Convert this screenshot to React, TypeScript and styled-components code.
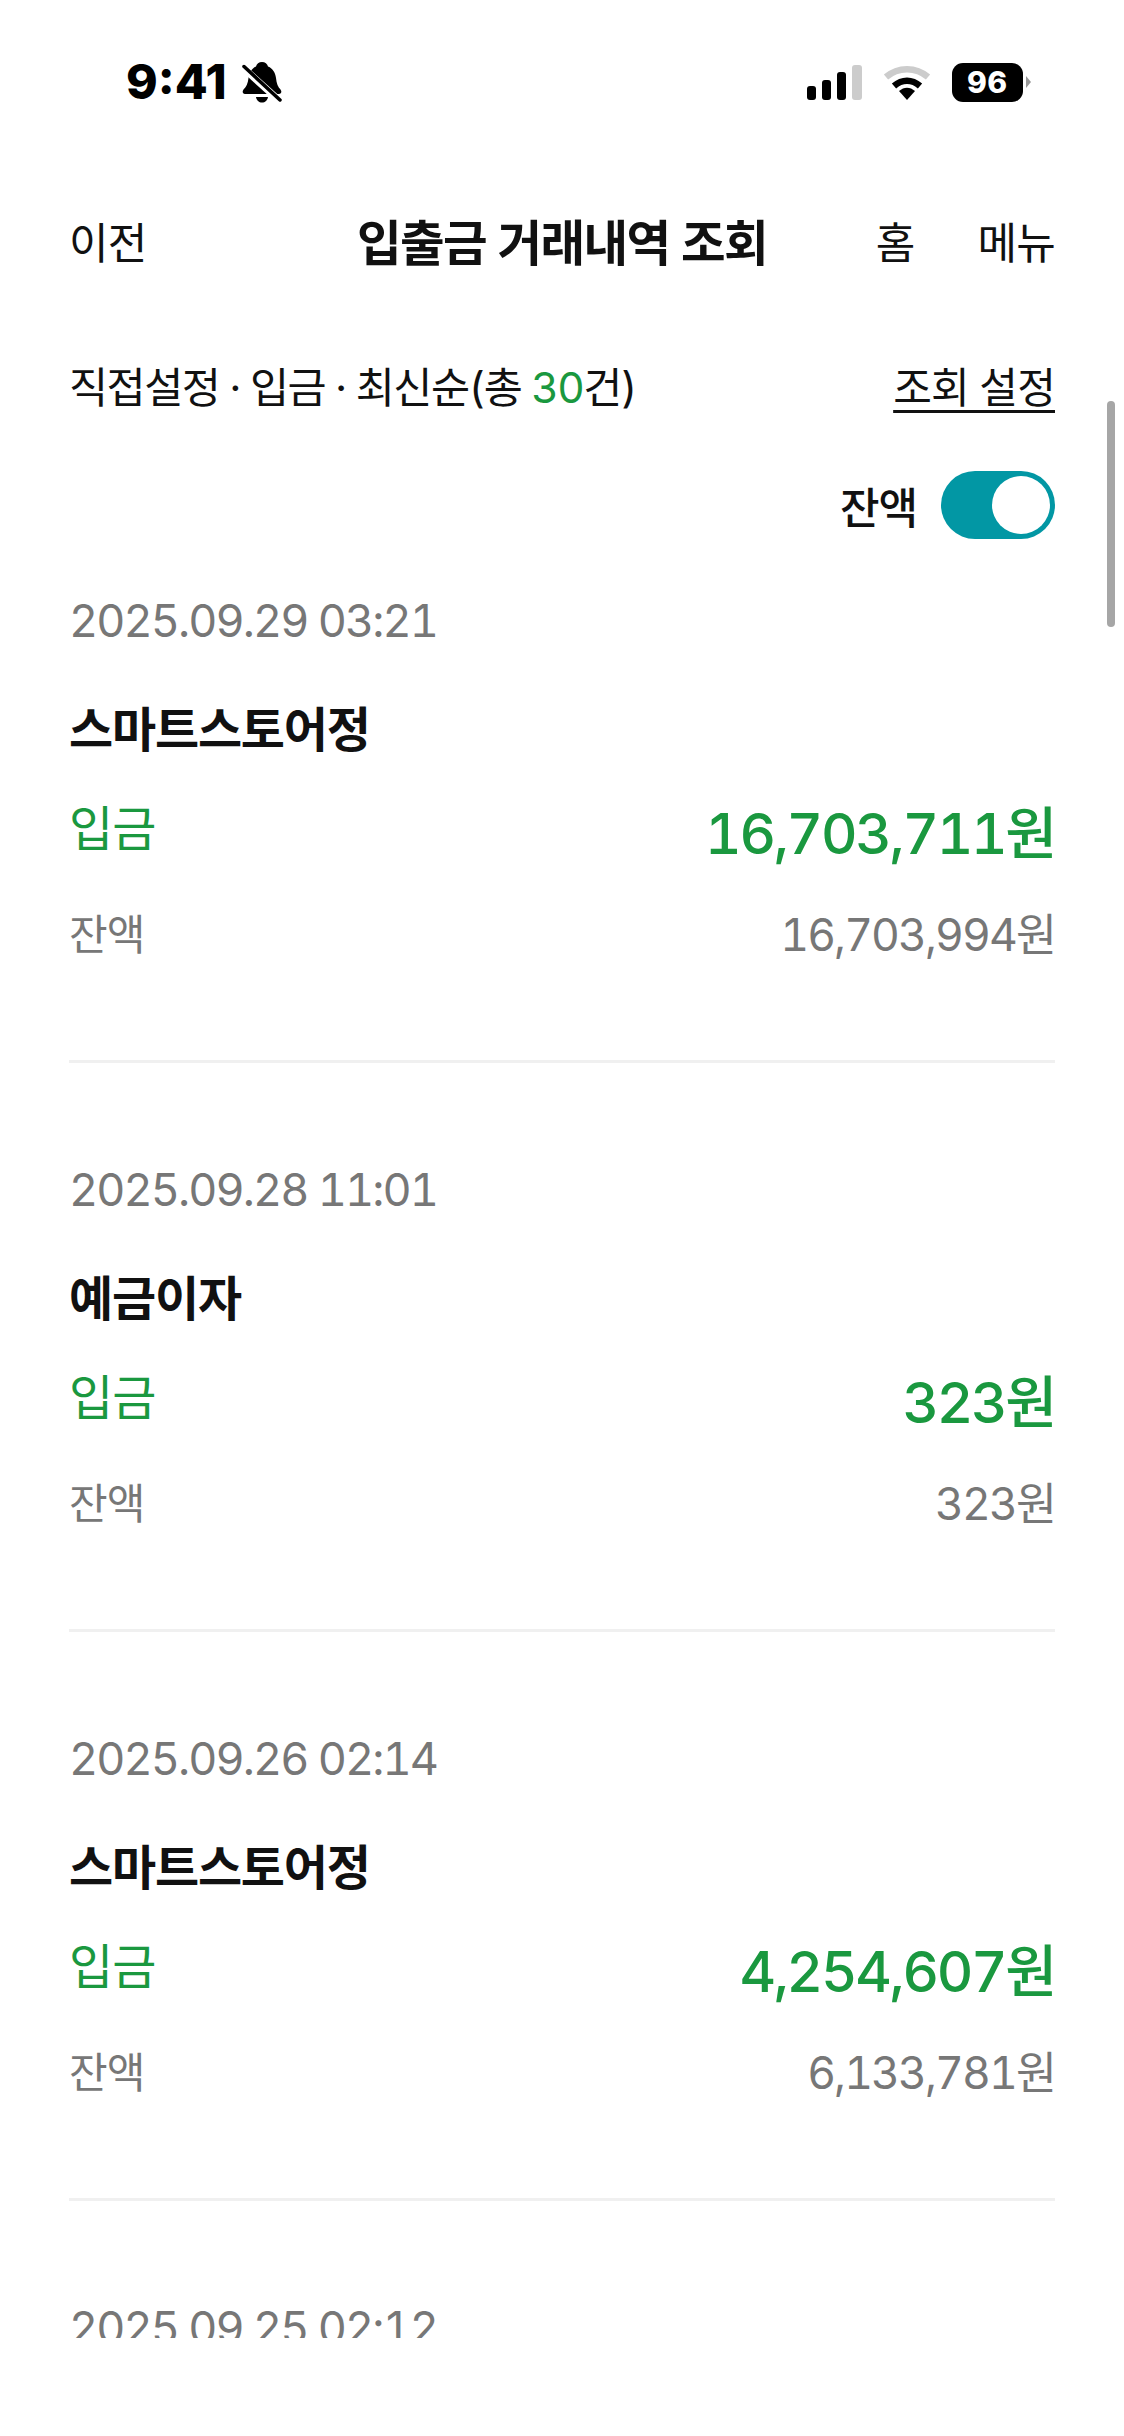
import React from 'react';
import styled, { createGlobalStyle } from 'styled-components';

const GlobalStyle = createGlobalStyle`
  html, body {
    margin: 0;
    padding: 0;
    background: #fff;
  }
  body {
    font-family: Inter, "Noto Sans CJK KR", sans-serif;
    font-variant-numeric: tabular-nums;
    color: #111;
  }
`;

const Page = styled.div`
  position: relative;
  width: 1124px;
  height: 2436px;
  overflow: hidden;
  background: #fff;
`;

const StatusBar = styled.div`
  display: flex;
  align-items: center;
  justify-content: space-between;
  height: 124px;
  padding: 40px 93px 0 126px;
  box-sizing: border-box;
`;

const StatusLeft = styled.div`
  display: flex;
  align-items: center;
  gap: 15px;
`;

const Clock = styled.span`
  font-family: Inter, sans-serif;
  font-variant-numeric: normal;
  font-size: 48px;
  font-weight: 800;
  line-height: 1;
  color: #000;
`;

const StatusRight = styled.div`
  display: flex;
  align-items: center;
  gap: 21px;
`;

const Battery = styled.div`
  display: flex;
  align-items: center;
  gap: 3px;
`;

const BatteryBody = styled.div`
  width: 71px;
  height: 39px;
  border-radius: 11px;
  background: #000;
  color: #fff;
  font-family: Inter, sans-serif;
  font-size: 30px;
  font-weight: 800;
  letter-spacing: 1px;
  display: flex;
  align-items: center;
  justify-content: center;
`;

const BatteryCap = styled.div`
  width: 0;
  height: 0;
  border-top: 6px solid transparent;
  border-bottom: 6px solid transparent;
  border-left: 5px solid #999;
`;

const Nav = styled.div`
  display: grid;
  grid-template-columns: 1fr auto 1fr;
  align-items: center;
  height: 84px;
  margin-top: 74px;
  padding: 0 69px;
`;

const NavText = styled.span`
  font-size: 43px;
  font-weight: 400;
  letter-spacing: -0.8px;
`;

const NavTitle = styled.h1`
  margin: 0;
  font-size: 48.5px;
  font-weight: 700;
  letter-spacing: -1.6px;
`;

const NavRight = styled.div`
  display: flex;
  justify-content: flex-end;
  gap: 63px;
`;

const FilterRow = styled.div`
  display: flex;
  align-items: center;
  justify-content: space-between;
  height: 60px;
  margin-top: 72px;
  padding: 0 69px;
`;

const FilterText = styled.span`
  font-size: 42.5px;
  letter-spacing: -1.5px;
`;

const Count = styled.span`
  color: #1a983f;
`;

const SettingLink = styled.span`
  font-size: 42px;
  letter-spacing: -0.8px;
  text-decoration: underline;
  text-underline-offset: 7px;
  text-decoration-thickness: 3px;
`;

const BalanceRow = styled.div`
  display: flex;
  align-items: center;
  justify-content: flex-end;
  gap: 24px;
  height: 68px;
  margin-top: 57px;
  padding: 0 69px;
`;

const BalanceLabel = styled.span`
  font-size: 43px;
  letter-spacing: -1px;
  font-weight: 500;
`;

const Toggle = styled.div`
  display: flex;
  justify-content: flex-end;
  align-items: center;
  width: 114px;
  height: 68px;
  padding: 0 5px;
  box-sizing: border-box;
  border-radius: 34px;
  background: #0297a4;
`;

const Knob = styled.div`
  width: 58px;
  height: 58px;
  border-radius: 50%;
  background: #fff;
`;

const List = styled.div`
  height: 1799px;
  overflow: hidden;
  padding: 0 69px;
`;

const Item = styled.div<{ $first?: boolean }>`
  height: ${(p) => (p.$first ? 524 : 569)}px;
  box-sizing: border-box;
  padding-top: ${(p) => (p.$first ? 57 : 102)}px;
  display: flex;
  flex-direction: column;
  border-bottom: 3px solid #f0f0f0;
`;

const Tail = styled.div`
  padding-top: 102px;
`;

const DateText = styled.div`
  font-size: 45px;
  line-height: 50px;
  letter-spacing: -1.9px;
  color: #777;
`;

const Merchant = styled.div`
  margin-top: 54px;
  font-size: 48px;
  line-height: 60px;
  font-weight: 700;
  letter-spacing: -1.2px;
  color: #111;
`;

const Row = styled.div<{ $mt: number }>`
  display: flex;
  align-items: center;
  justify-content: space-between;
  margin-top: ${(p) => p.$mt}px;
`;

const TypeLabel = styled.span`
  font-size: 48px;
  line-height: 50px;
  margin-bottom: 10px;
  color: #1a983f;
  letter-spacing: -1px;
`;

const Amount = styled.span`
  font-size: 56.5px;
  line-height: 70px;
  font-weight: 500;
  letter-spacing: -2.3px;
  color: #1a983f;
`;

const SmallLabel = styled.span`
  font-size: 42px;
  line-height: 50px;
  color: #777;
  letter-spacing: -1px;
`;

const SmallAmount = styled.span`
  font-size: 44.5px;
  line-height: 50px;
  letter-spacing: -1.9px;
  color: #777;
`;

const Scrollbar = styled.div`
  position: absolute;
  top: 401px;
  right: 9px;
  width: 8px;
  height: 226px;
  border-radius: 4px;
  background: #a6a6a6;
`;

const MutedBell = () => (
  <svg width="40" height="41" viewBox="0 0 40 41" fill="none">
    <path
      d="M20 0c3 0 5.500 1.800 6 4.500C31 6.500 33.500 11 34 16c.5 5.500 2 9 4.500 11.500C40 29.500 39.500 32 37 32H3C.5 32 0 29.500 1.500 27.500 4 25 6 21.500 6.500 16 7 11 9.500 6.500 14 4.500 14.500 1.800 17 0 20 0z"
      fill="#000"
    />
    <path d="M14 35h12c-.5 3.500-3 5.500-6 5.500s-5.500-2-6-5.500z" fill="#000" />
    <path d="M-2 3l42 38" stroke="#fff" strokeWidth="7" />
    <path d="M2 4.500l36 33.500" stroke="#000" strokeWidth="3.500" strokeLinecap="round" />
  </svg>
);

const Signal = () => (
  <svg width="55" height="35" viewBox="0 0 55 35" fill="#000">
    <rect x="0" y="21" width="9" height="14" rx="3" />
    <rect x="15" y="15" width="9" height="20" rx="3" />
    <rect x="30" y="7" width="9" height="28" rx="3" />
    <rect x="45" y="0" width="10" height="35" rx="3" fill="#ccc" />
  </svg>
);

const Wifi = () => (
  <svg width="48" height="35" viewBox="0 0 48 35" fill="none">
    <path d="M3 12C15 1.500 33 1.500 45 12" stroke="#ccc" strokeWidth="6.500" />
    <path d="M11 21c8-7 18-7 26 0" stroke="#000" strokeWidth="6.500" />
    <path d="M16 26c5-4.500 11-4.500 16 0l-8 9z" fill="#000" />
  </svg>
);

const transactions = [
  { date: '2025.09.29 03:21', name: '스마트스토어정', amount: '16,703,711원', balance: '16,703,994원' },
  { date: '2025.09.28 11:01', name: '예금이자', amount: '323원', balance: '323원' },
  { date: '2025.09.26 02:14', name: '스마트스토어정', amount: '4,254,607원', balance: '6,133,781원' },
];

const App: React.FC = () => {
  return (
    <Page>
      <GlobalStyle />
      <StatusBar>
        <StatusLeft>
          <Clock>9:41</Clock>
          <MutedBell />
        </StatusLeft>
        <StatusRight>
          <Signal />
          <Wifi />
          <Battery>
            <BatteryBody>96</BatteryBody>
            <BatteryCap />
          </Battery>
        </StatusRight>
      </StatusBar>

      <Nav>
        <NavText>이전</NavText>
        <NavTitle>입출금 거래내역 조회</NavTitle>
        <NavRight>
          <NavText>홈</NavText>
          <NavText>메뉴</NavText>
        </NavRight>
      </Nav>

      <FilterRow>
        <FilterText>
          직접설정 · 입금 · 최신순(총 <Count>30</Count>건)
        </FilterText>
        <SettingLink>조회 설정</SettingLink>
      </FilterRow>

      <BalanceRow>
        <BalanceLabel>잔액</BalanceLabel>
        <Toggle>
          <Knob />
        </Toggle>
      </BalanceRow>

      <List>
        {transactions.map((t, i) => (
          <Item key={t.date} $first={i === 0}>
            <DateText>{t.date}</DateText>
            <Merchant>{t.name}</Merchant>
            <Row $mt={39}>
              <TypeLabel>입금</TypeLabel>
              <Amount>{t.amount}</Amount>
            </Row>
            <Row $mt={41}>
              <SmallLabel>잔액</SmallLabel>
              <SmallAmount>{t.balance}</SmallAmount>
            </Row>
          </Item>
        ))}
        <Tail>
          <DateText>2025.09.25 02:12</DateText>
        </Tail>
      </List>

      <Scrollbar />
    </Page>
  );
};

export default App;
